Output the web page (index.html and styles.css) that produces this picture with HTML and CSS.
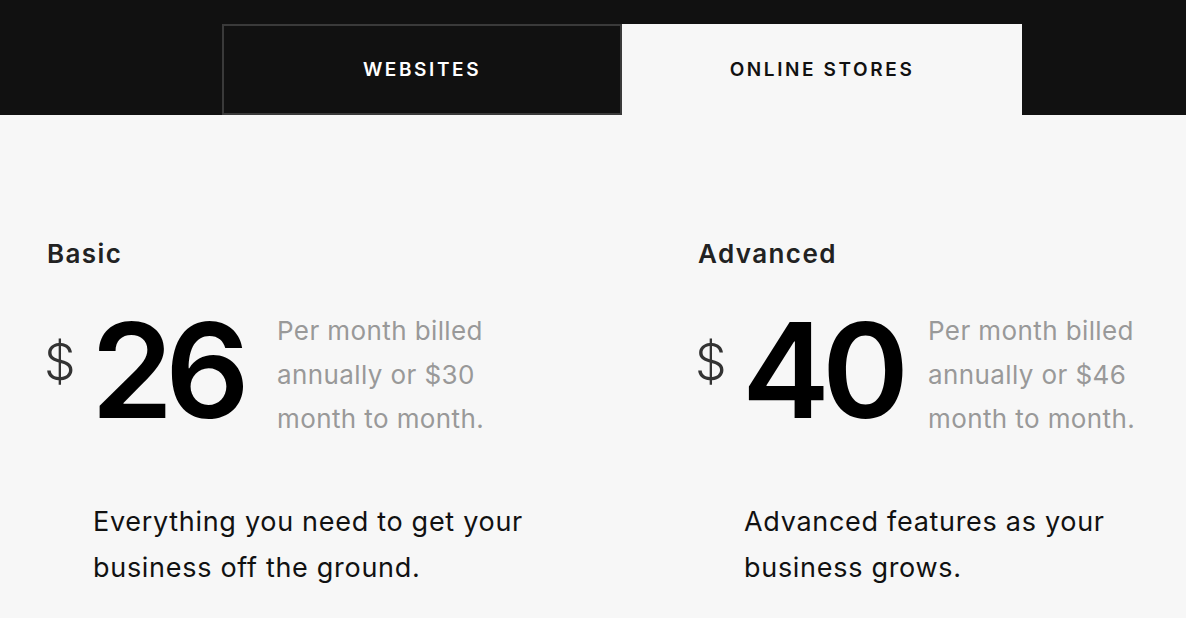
FILE: index.html
```html
<!DOCTYPE html>
<html lang="en">
<head>
    <meta charset="UTF-8">
    <meta name="viewport" content="width=device-width, initial-scale=1.0">
    <title>Pricing</title>
    <link rel="stylesheet" href="styles.css">
</head>
<body>
    <div class="tabs-bar">
        <div class="tabs">
            <button type="button" class="tab">Websites</button>
            <button type="button" class="tab active">Online Stores</button>
        </div>
    </div>

    <div class="plans">
        <div class="plan">
            <h3 class="plan-name">Basic</h3>
            <div class="price-row">
                <span class="currency">$</span>
                <span class="amount">26</span>
                <p class="billing">Per month billed annually or $30 month to month.</p>
            </div>
            <p class="plan-desc">Everything you need to get your business off the ground.</p>
        </div>
        <div class="plan">
            <h3 class="plan-name">Advanced</h3>
            <div class="price-row">
                <span class="currency">$</span>
                <span class="amount">40</span>
                <p class="billing">Per month billed annually or $46 month to month.</p>
            </div>
            <p class="plan-desc">Advanced features as your business grows.</p>
        </div>
    </div>
</body>
</html>
```

FILE: styles.css
```css
body {
    margin: 0;
    background-color: #f7f7f7;
    font-family: "Inter", "Liberation Sans", sans-serif;
    color: #111;
}
.tabs-bar {
    background-color: #111;
    padding: 24px 0 0 222px;
}
.tabs {
    display: flex;
}
.tab {
    width: 400px;
    height: 91px;
    box-sizing: border-box;
    background-color: #111;
    color: #fff;
    border: 2px solid #3a3a3a;
    font-family: inherit;
    font-size: 19px;
    font-weight: 600;
    letter-spacing: 2.6px;
    text-transform: uppercase;
    padding: 0;
    cursor: pointer;
}
.tab.active {
    background-color: #f7f7f7;
    color: #111;
    border: none;
}
.plans {
    display: grid;
    grid-template-columns: 651px 1fr;
    padding: 123px 0 0 47px;
}
.plan-name {
    margin: 0;
    font-size: 26px;
    line-height: 32px;
    font-weight: 600;
    letter-spacing: 1.4px;
    color: #222;
}
.price-row {
    display: flex;
    align-items: flex-start;
    margin-top: 34px;
}
.currency {
    font-size: 50px;
    line-height: 1;
    font-weight: 300;
    color: #333;
    margin: 33px 0 0 -3px;
    width: 47px;
}
.amount {
    font-size: 132px;
    line-height: 1;
    font-weight: 600;
    letter-spacing: -8px;
    color: #000;
    width: 186px;
}
.billing {
    margin: 5px 0 0;
    width: 225px;
    font-size: 26px;
    line-height: 44px;
    letter-spacing: 0.4px;
    color: #999;
}
.plan-desc {
    margin: 58px 0 0 46px;
    width: 450px;
    font-size: 27px;
    line-height: 46px;
    letter-spacing: 0.7px;
    color: #111;
}
```
